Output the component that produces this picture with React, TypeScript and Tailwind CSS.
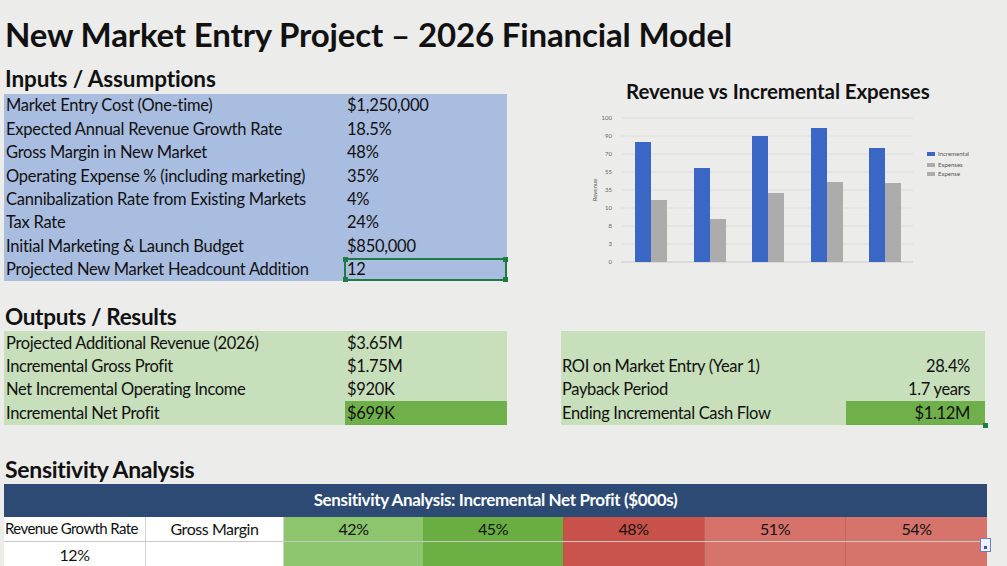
import React from "react";

const inputs: [string, string][] = [
  ["Market Entry Cost (One-time)", "$1,250,000"],
  ["Expected Annual Revenue Growth Rate", "18.5%"],
  ["Gross Margin in New Market", "48%"],
  ["Operating Expense % (including marketing)", "35%"],
  ["Cannibalization Rate from Existing Markets", "4%"],
  ["Tax Rate", "24%"],
  ["Initial Marketing & Launch Budget", "$850,000"],
  ["Projected New Market Headcount Addition", "12"],
];

const outputsLeft: [string, string][] = [
  ["Projected Additional Revenue (2026)", "$3.65M"],
  ["Incremental Gross Profit", "$1.75M"],
  ["Net Incremental Operating Income", "$920K"],
  ["Incremental Net Profit", "$699K"],
];

const outputsRight: [string, string][] = [
  ["", ""],
  ["ROI on Market Entry (Year 1)", "28.4%"],
  ["Payback Period", "1.7 years"],
  ["Ending Incremental Cash Flow", "$1.12M"],
];

function Chart() {
  const gridTop = 8;
  const gridBottom = 152;
  const step = (gridBottom - gridTop) / 8;
  const labels = ["100", "90", "70", "55", "35", "10", "8", "3", "0"];
  const bars = [
    { x: 50, b: 32, g: 90 },
    { x: 109, b: 58, g: 109 },
    { x: 167, b: 26, g: 83 },
    { x: 226, b: 18, g: 72 },
    { x: 284, b: 38, g: 73 },
  ];
  return (
    <svg width="422" height="160" viewBox="0 0 422 160" className="block">
      {labels.map((l, i) => (
        <g key={i}>
          <line
            x1={36}
            x2={328}
            y1={gridTop + i * step}
            y2={gridTop + i * step}
            stroke={i === 8 ? "#c8c8c8" : "#dcdcdc"}
            strokeWidth={1}
          />
          <text
            x={27}
            y={gridTop + i * step + 2}
            fontSize="6"
            fill="#666"
            textAnchor="end"
            fontFamily="Lato, sans-serif"
          >
            {l}
          </text>
        </g>
      ))}
      <text
        x={12}
        y={80}
        fontSize="6"
        fill="#555"
        textAnchor="middle"
        fontFamily="Lato, sans-serif"
        transform="rotate(-90 12 80)"
      >
        Revenue
      </text>
      {bars.map((bar, i) => (
        <g key={i}>
          <rect x={bar.x} y={bar.b} width={16} height={gridBottom - bar.b} fill="#3a66c4" />
          <rect x={bar.x + 16} y={bar.g} width={16} height={gridBottom - bar.g} fill="#acacac" />
        </g>
      ))}
      <rect x={342} y={42} width={8} height={4} fill="#3a66c4" />
      <text x={353} y={46} fontSize="6" fill="#555" fontFamily="Lato, sans-serif">Incremental</text>
      <rect x={342} y={53} width={8} height={4} fill="#acacac" />
      <text x={353} y={57} fontSize="6" fill="#555" fontFamily="Lato, sans-serif">Expenses</text>
      <rect x={342} y={62} width={8} height={4} fill="#acacac" />
      <text x={353} y={66} fontSize="6" fill="#555" fontFamily="Lato, sans-serif">Expense</text>
    </svg>
  );
}

export default function App() {
  return (
    <div
      className="w-[1007px] h-[566px] overflow-hidden bg-[#ececeb] text-[#111] relative"
      style={{ fontFamily: "Lato, 'Noto Sans', sans-serif" }}
    >
      <div className="pl-[5px] pt-[14px] h-[60px] text-[33px] font-bold leading-[40px] tracking-[-0.15px] whitespace-nowrap">
        New Market Entry Project – 2026 Financial Model
      </div>

      <div className="flex">
        <div className="w-[508px] pl-[4px]">
          <div className="pl-[1px] h-[34px] text-[22.5px] font-bold leading-[38px] tracking-[-0.1px] whitespace-nowrap">
            Inputs / Assumptions
          </div>
          <div className="bg-[#a9bde0] w-[503px]">
            {inputs.map(([k, v], i) => (
              <div key={i} className="flex h-[23.4px] items-center text-[16.5px] leading-none tracking-[-0.25px] whitespace-nowrap">
                <div className="w-[340px] pl-[2px]">{k}</div>
                <div className="relative flex-1 h-full flex items-center pl-[3px]">
                  {i === inputs.length - 1 && (
                    <div className="absolute left-0 right-0 top-0 bottom-0 border-2 border-[#1f7a43]">
                      <div className="absolute -left-[3px] -top-[3px] w-[5px] h-[5px] bg-[#1f7a43]" />
                      <div className="absolute -right-[3px] -top-[3px] w-[5px] h-[5px] bg-[#1f7a43]" />
                      <div className="absolute -left-[3px] -bottom-[3px] w-[5px] h-[5px] bg-[#1f7a43]" />
                      <div className="absolute -right-[3px] -bottom-[3px] w-[5px] h-[5px] bg-[#1f7a43]" />
                    </div>
                  )}
                  <span className="relative">{v}</span>
                </div>
              </div>
            ))}
          </div>
        </div>
        <div className="flex-1 flex flex-col pt-[16px]">
          <div className="h-[34px] pl-[118px] text-[20.5px] font-bold leading-[30px] tracking-[-0.1px] whitespace-nowrap">
            Revenue vs Incremental Expenses
          </div>
          <div className="pl-[77px]">
            <Chart />
          </div>
        </div>
      </div>

      <div className="pl-[5px] pt-[22px] h-[50px] text-[22.5px] font-bold leading-[28px] tracking-[-0.3px] whitespace-nowrap">
        Outputs / Results
      </div>
      <div className="flex pl-[4px] gap-[54px]">
        <div className="w-[503px] bg-[#c7dfba]">
          {outputsLeft.map(([k, v], i) => (
            <div key={i} className="flex h-[23.4px] items-center text-[16.5px] leading-none tracking-[-0.35px] whitespace-nowrap">
              <div className="w-[341px] pl-[2px]">{k}</div>
              <div
                className={
                  "flex-1 h-full flex items-center pl-[2px] " +
                  (i === 3 ? "bg-[#6fb04a]" : "")
                }
              >
                {v}
              </div>
            </div>
          ))}
        </div>
        <div className="w-[424px] bg-[#c7dfba] relative">
          {outputsRight.map(([k, v], i) => (
            <div key={i} className="flex h-[23.4px] items-center text-[16.5px] leading-none tracking-[-0.35px] whitespace-nowrap">
              <div className="w-[285px] pl-[1px]">{k}</div>
              <div
                className={
                  "flex-1 h-full flex items-center justify-end pr-[15px] " +
                  (i === 3 ? "bg-[#6fb04a]" : "")
                }
              >
                {v}
              </div>
            </div>
          ))}
          <div className="absolute -right-[3px] -bottom-[3px] w-[5px] h-[5px] bg-[#1f7a43]" />
        </div>
      </div>

      <div className="pl-[5px] pt-[30px] h-[59px] text-[23px] font-bold leading-[29px] tracking-[-0.3px] whitespace-nowrap">
        Sensitivity Analysis
      </div>
      <div className="ml-[4px] w-[983px]">
        <div className="h-[33px] bg-[#2c4a73] text-white text-[17px] font-bold flex items-center justify-center tracking-[-0.35px] whitespace-nowrap">
          Sensitivity Analysis: Incremental Net Profit ($000s)
        </div>
        <div className="flex h-[25px] text-[16px] tracking-[-0.45px] border-b border-[#c9c9c9] whitespace-nowrap">
          <div className="w-[142px] bg-white flex items-center pl-[1px] border-r border-[#d0d0d0] text-[15px] tracking-[-0.6px]">Revenue Growth Rate</div>
          <div className="w-[138px] bg-white flex items-center justify-center border-r border-[#d0d0d0]">Gross Margin</div>
          <div className="w-[139px] bg-[#8cc56c] flex items-center justify-center">42%</div>
          <div className="w-[140px] bg-[#6aae42] flex items-center justify-center">45%</div>
          <div className="w-[142px] bg-[#c8514a] flex items-center justify-center border-r border-[#b9655e]">48%</div>
          <div className="w-[141px] bg-[#d6726a] flex items-center justify-center border-r border-[#c0645d]">51%</div>
          <div className="flex-1 bg-[#d6736b] flex items-center justify-center">54%</div>
        </div>
        <div className="flex h-[26px] text-[16px] tracking-[-0.45px] relative">
          <div className="w-[142px] bg-white flex items-center justify-center border-r border-[#d0d0d0]">12%</div>
          <div className="w-[138px] bg-white border-r border-[#d0d0d0]" />
          <div className="w-[139px] bg-[#8ec66f]" />
          <div className="w-[140px] bg-[#6cb045]" />
          <div className="w-[142px] bg-[#c9544c] border-r border-[#b9655e]" />
          <div className="w-[141px] bg-[#d6746b] border-r border-[#c0645d]" />
          <div className="flex-1 bg-[#d6746c]" />
          <div className="absolute right-[-4px] top-[-4px] w-[11px] h-[14px] bg-[#eef1fa] border border-[#6b7fc4] flex items-end justify-center">
            <div className="w-[3px] h-[3px] bg-[#3b54a8] mb-[2px]" />
          </div>
        </div>
      </div>
    </div>
  );
}
